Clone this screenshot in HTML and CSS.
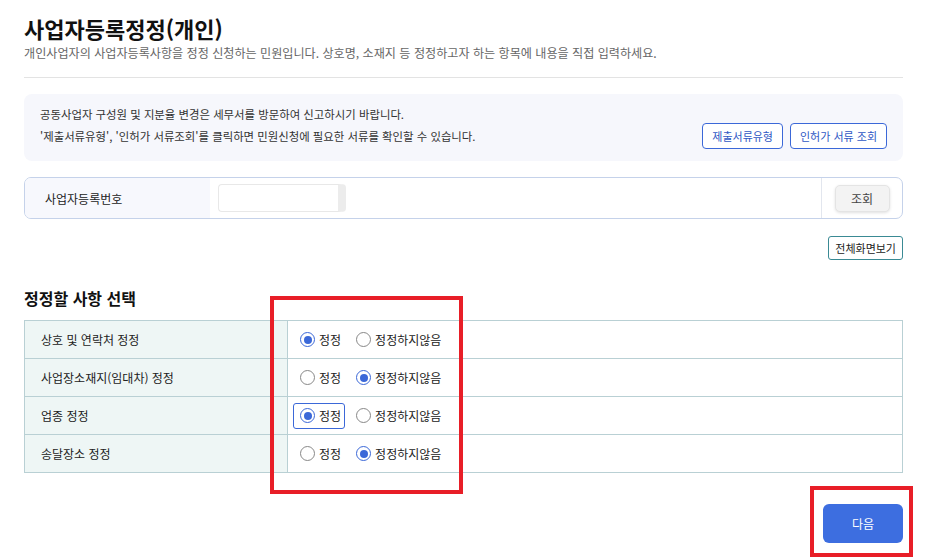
FILE: index.html
```html
<!DOCTYPE html>
<html lang="ko">
  <head>
    <meta charset="UTF-8" />
    <meta name="viewport" content="width=device-width, initial-scale=1.0" />
    <title>사업자등록정정(개인)</title>
    <link rel="stylesheet" href="styles.css">
  </head>
  <body>
    <div class="wrap">
      <!-- 제목 -->
      <div class="page-head">
        <h1>사업자등록정정(개인)</h1>
        <p class="desc">개인사업자의 사업자등록사항을 정정 신청하는 민원입니다. 상호명, 소재지 등 정정하고자 하는 항목에 내용을 직접 입력하세요.</p>
      </div>

      <!-- 안내 -->
      <div class="notice">
        <p>공동사업자 구성원 및 지분율 변경은 세무서를 방문하여 신고하시기 바랍니다.</p>
        <div class="notice-row">
          <p>'제출서류유형', '인허가 서류조회'를 클릭하면 민원신청에 필요한 서류를 확인할 수 있습니다.</p>
          <div class="notice-btns">
            <button class="btn-line">제출서류유형</button>
            <button class="btn-line">인허가 서류 조회</button>
          </div>
        </div>
      </div>

      <!-- 사업자등록번호 -->
      <div class="search-row">
        <div class="search-label">사업자등록번호</div>
        <div class="search-input">
          <span class="masked"></span>
        </div>
        <div class="search-btn">
          <button class="btn-gray">조회</button>
        </div>
      </div>

      <div class="full-view">
        <button class="btn-teal">전체화면보기</button>
      </div>

      <!-- 정정할 사항 선택 -->
      <h2>정정할 사항 선택</h2>
      <table class="select-table">
        <tr>
          <th>상호 및 연락처 정정</th>
          <td>
            <div class="opts">
              <label class="opt"><input type="radio" name="r1" checked />정정</label>
              <label class="opt"><input type="radio" name="r1" />정정하지않음</label>
            </div>
          </td>
        </tr>
        <tr>
          <th>사업장소재지(임대차) 정정</th>
          <td>
            <div class="opts">
              <label class="opt"><input type="radio" name="r2" />정정</label>
              <label class="opt"><input type="radio" name="r2" checked />정정하지않음</label>
            </div>
          </td>
        </tr>
        <tr>
          <th>업종 정정</th>
          <td>
            <div class="opts">
              <label class="opt focus"><input type="radio" name="r3" checked />정정</label>
              <label class="opt"><input type="radio" name="r3" />정정하지않음</label>
            </div>
          </td>
        </tr>
        <tr>
          <th>송달장소 정정</th>
          <td>
            <div class="opts">
              <label class="opt"><input type="radio" name="r4" />정정</label>
              <label class="opt"><input type="radio" name="r4" checked />정정하지않음</label>
            </div>
          </td>
        </tr>
      </table>

      <div class="bottom">
        <button class="btn-next">다음</button>
      </div>
    </div>

    <!-- 표시 박스 -->
    <div class="mark mark-radio"></div>
    <div class="mark mark-next"></div>
  </body>
</html>
```
FILE: styles.css
```css
* {
  box-sizing: border-box;
}

body {
  margin: 0;
  background-color: white;
  font-family: "Noto Sans CJK KR", "Noto Sans", sans-serif;
  color: #222;
}

.wrap {
  width: 879px;
  margin-left: 24px;
}

/* 제목 */
.page-head {
  padding-top: 13px;
  padding-bottom: 14px;
  border-bottom: 1px solid #e3e3e3;
}

h1 {
  margin: 0;
  font-size: 22px;
  line-height: 30px;
  font-weight: 700;
  color: #111;
}

.desc {
  margin: 0;
  font-size: 12.1px;
  line-height: 20px;
  color: #666;
}

/* 안내 */
.notice {
  margin-top: 16px;
  padding: 11px 16px 12px 16px;
  background-color: #f6f7fc;
  border-radius: 8px;
  font-size: 11.4px;
  color: #333;
}

.notice p {
  margin: 0;
  line-height: 18px;
}

.notice-row {
  display: flex;
  align-items: center;
  justify-content: space-between;
}

.notice-btns {
  display: flex;
  gap: 7px;
}

button {
  font-family: inherit;
  cursor: pointer;
}

.btn-line {
  height: 26px;
  padding: 0 9px;
  border: 1px solid #3b68d8;
  border-radius: 4px;
  background-color: white;
  color: #2f58c4;
  font-size: 11px;
}

/* 사업자등록번호 */
.search-row {
  display: flex;
  height: 42px;
  margin-top: 16px;
  border: 1px solid #c5d2ea;
  border-radius: 7px;
  overflow: hidden;
}

.search-label {
  width: 185px;
  padding-left: 20px;
  display: flex;
  align-items: center;
  background-color: #f7f8fd;
  font-size: 12px;
  color: #222;
}

.search-input {
  flex: 1;
  display: flex;
  align-items: center;
  padding-left: 8px;
}

.masked {
  width: 128px;
  height: 28px;
  border: 1px solid #e8e8e8;
  border-right: 8px solid #ececec;
  border-radius: 4px;
  background-color: white;
}

.search-btn {
  width: 81px;
  display: flex;
  align-items: center;
  justify-content: center;
  border-left: 1px solid #e2e6ee;
}

.btn-gray {
  width: 55px;
  height: 27px;
  border: 1px solid #e4e4e4;
  border-radius: 5px;
  background-color: #f3f3f3;
  box-shadow: 0 1px 3px rgba(0, 0, 0, 0.12);
  color: #444;
  font-size: 12px;
}

.full-view {
  display: flex;
  justify-content: flex-end;
  margin-top: 17px;
}

.btn-teal {
  height: 24px;
  padding: 0 6px;
  border: 1px solid #3a8a94;
  border-radius: 3px;
  background-color: white;
  color: #222;
  font-size: 11px;
}

/* 정정할 사항 선택 */
h2 {
  margin: 27px 0 11px 0;
  font-size: 16px;
  line-height: 22px;
  font-weight: 700;
  color: #111;
}

.select-table {
  width: 100%;
  border-collapse: collapse;
  border: 1px solid #b9d0d4;
}

.select-table tr {
  height: 38px;
}

.select-table th,
.select-table td {
  border-top: 1px solid #b9d0d4;
  border-bottom: 1px solid #b9d0d4;
  padding: 0;
  font-size: 12px;
}

.select-table th {
  width: 263px;
  padding-left: 16px;
  text-align: left;
  font-weight: 400;
  color: #222;
  background-color: #eef6f5;
  border-right: 1px solid #b9d0d4;
}

.select-table td {
  padding-left: 5px;
}

.opts {
  display: flex;
  align-items: center;
  gap: 4px;
}

.opt {
  display: flex;
  align-items: center;
  gap: 4px;
  height: 26px;
  padding: 0 3px 0 6px;
  border: 1px solid transparent;
  border-radius: 3px;
  font-size: 12px;
  color: #222;
}

.opt.focus {
  border-color: #3b68d8;
}

.opt input {
  appearance: none;
  width: 15px;
  height: 15px;
  margin: 0;
  border: 1px solid #888;
  border-radius: 50%;
  background-color: white;
  display: grid;
  place-items: center;
}

.opt input:checked {
  border-color: #3b68d8;
}

.opt input:checked::after {
  content: "";
  width: 8px;
  height: 8px;
  border-radius: 50%;
  background-color: #3b68d8;
}

.bottom {
  display: flex;
  justify-content: flex-end;
  margin-top: 31px;
}

.btn-next {
  width: 80px;
  height: 39px;
  border: none;
  border-radius: 6px;
  background-color: #3d6ee0;
  color: white;
  font-size: 12px;
}

/* 표시 박스 */
.mark {
  position: absolute;
  border: 4px solid #e81e27;
}

.mark-radio {
  left: 270px;
  top: 296px;
  width: 193px;
  height: 198px;
}

.mark-next {
  left: 810px;
  top: 486px;
  width: 103px;
  height: 71px;
}
```
